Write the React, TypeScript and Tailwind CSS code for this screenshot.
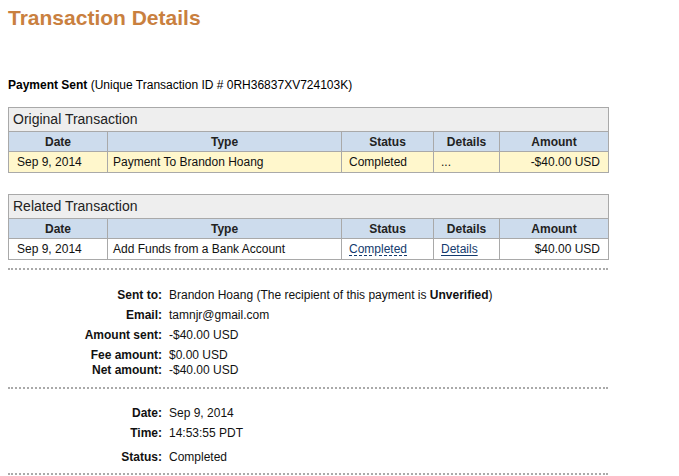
const font = { fontFamily: '"Liberation Sans", Arial, Helvetica, sans-serif' };

type Row = { date: string; type: string; status: string; details: string; amount: string };

function TxTable({
  title,
  row,
  rowBg,
  linked,
}: {
  title: string;
  row: Row;
  rowBg: string;
  linked?: boolean;
}) {
  const th = "border border-[#a9a9a9] text-[12px] font-bold text-[#222] text-center p-0";
  const td = "border border-[#a9a9a9] text-[12px] text-[#111] p-0";
  return (
    <table className="w-[600px] table-fixed border-collapse">
      <colgroup>
        <col className="w-[99px]" />
        <col className="w-[234px]" />
        <col className="w-[92px]" />
        <col className="w-[66px]" />
        <col className="w-[109px]" />
      </colgroup>
      <thead>
        <tr className="h-[24px] bg-[#eeeeee]">
          <th colSpan={5} className="border border-[#a9a9a9] px-[4px] text-left text-[14px] font-normal text-[#222]">
            {title}
          </th>
        </tr>
        <tr className="h-[20px] bg-[#cddced]">
          <th className={th}>Date</th>
          <th className={th}>Type</th>
          <th className={th}>Status</th>
          <th className={th}>Details</th>
          <th className={th}>Amount</th>
        </tr>
      </thead>
      <tbody>
        <tr className={`h-[21px] ${rowBg}`}>
          <td className={`${td} pl-[8px]`}>{row.date}</td>
          <td className={`${td} pl-[5px]`}>{row.type}</td>
          <td className={`${td} pl-[7px]`}>
            {linked ? (
              <span className="text-[#133a6e] underline decoration-dashed decoration-[#133a6e] underline-offset-2">
                {row.status}
              </span>
            ) : (
              row.status
            )}
          </td>
          <td className={`${td} pl-[7px]`}>
            {linked ? <span className="text-[#133a6e] underline underline-offset-2">{row.details}</span> : row.details}
          </td>
          <td className={`${td} pr-[8px] text-right`}>{row.amount}</td>
        </tr>
      </tbody>
    </table>
  );
}

function Field({ label, children, className = "" }: { label: string; children: React.ReactNode; className?: string }) {
  return (
    <div className={`flex text-[12px] leading-[15px] ${className}`}>
      <div className="w-[154px] text-right font-bold text-[#111]">{label}</div>
      <div className="pl-[7px] text-[#111]">{children}</div>
    </div>
  );
}

function Dotted({ className = "" }: { className?: string }) {
  return <div className={`w-[600px] border-t-2 border-dotted border-[#aaaaaa] ${className}`} />;
}

export default function App() {
  return (
    <div className="min-h-screen w-full bg-white px-2 text-black" style={font}>
      <h1 className="pt-[4px] text-[21px] font-bold leading-[28px] text-[#c9803f]">Transaction Details</h1>

      <p className="mt-[46px] text-[12px] leading-[15px]">
        <b>Payment Sent</b> (Unique Transaction ID # 0RH36837XV724103K)
      </p>

      <div className="mt-[14px]">
        <TxTable
          title="Original Transaction"
          rowBg="bg-[#fff7cc]"
          row={{ date: "Sep 9, 2014", type: "Payment To Brandon Hoang", status: "Completed", details: "...", amount: "-$40.00 USD" }}
        />
      </div>

      <div className="mt-[21px]">
        <TxTable
          title="Related Transaction"
          rowBg="bg-white"
          linked
          row={{ date: "Sep 9, 2014", type: "Add Funds from a Bank Account", status: "Completed", details: "Details", amount: "$40.00 USD" }}
        />
      </div>

      <Dotted className="mt-[8px]" />

      <div className="pt-[18px] pb-[9px]">
        <Field label="Sent to:">
          Brandon Hoang (The recipient of this payment is <b>Unverified</b>)
        </Field>
        <Field label="Email:" className="mt-[5px]">tamnjr@gmail.com</Field>
        <Field label="Amount sent:" className="mt-[5px]">-$40.00 USD</Field>
        <Field label="Fee amount:" className="mt-[5px]">$0.00 USD</Field>
        <Field label="Net amount:">-$40.00 USD</Field>
      </div>

      <Dotted />

      <div className="pt-[17px] pb-[8px]">
        <Field label="Date:">Sep 9, 2014</Field>
        <Field label="Time:" className="mt-[5px]">14:53:55 PDT</Field>
        <Field label="Status:" className="mt-[9px]">Completed</Field>
      </div>

      <Dotted />
    </div>
  );
}
